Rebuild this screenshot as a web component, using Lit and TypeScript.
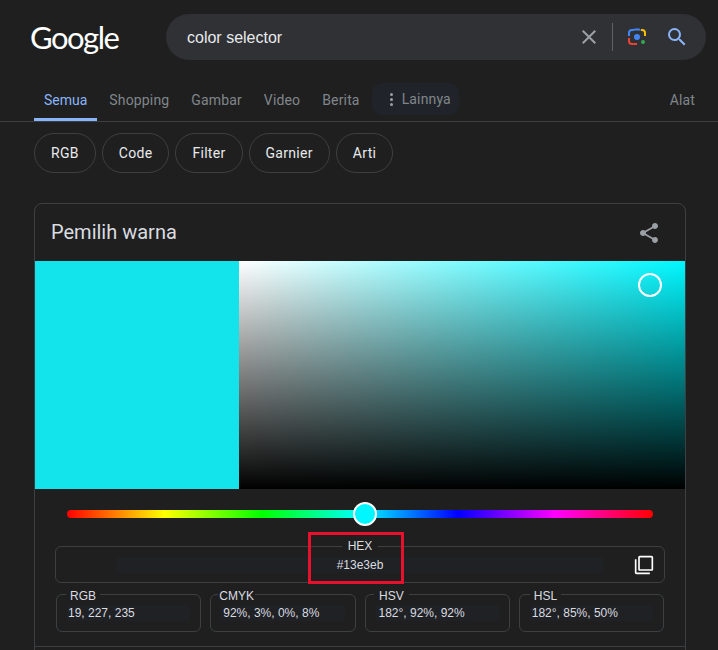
import { LitElement, html, css, svg } from "lit";
import { customElement } from "lit/decorators.js";

const tabs = ["Semua", "Shopping", "Gambar", "Video", "Berita"];
const chips = ["RGB", "Code", "Filter", "Garnier", "Arti"];
const formats = [
  { label: "RGB", value: "19, 227, 235", pad: 4, shift: -1, indent: 1 },
  { label: "CMYK", value: "92%, 3%, 0%, 8%", pad: 1, shift: -3, indent: 2 },
  { label: "HSV", value: "182°, 92%, 92%", pad: 5, shift: -1.5, indent: 3 },
  { label: "HSL", value: "182°, 85%, 50%", pad: 4, shift: 0, indent: 2 },
];

const icon = (size: number, fill: string, d: string) => html`
  <svg width=${size} height=${size} viewBox="0 0 24 24" fill=${fill}>${svg`<path d=${d}></path>`}</svg>
`;

@customElement("app-root")
export class AppRoot extends LitElement {
  static styles = css`
    :host {
      display: block;
      width: 718px;
      height: 650px;
      overflow: hidden;
      background: #1f1f1f;
      font-family: Roboto, "Liberation Sans", sans-serif;
      color: #e8eaed;
    }

    .header {
      display: flex;
      align-items: center;
      height: 46px;
      padding: 14px 12px 0 30px;
    }

    .logo {
      width: 136px;
      flex: none;
      font-family: Lato, sans-serif;
      font-size: 31px;
      line-height: 46px;
      letter-spacing: -1.5px;
      color: #fff;
    }

    .search {
      display: flex;
      align-items: center;
      width: 540px;
      height: 46px;
      flex: none;
      box-sizing: border-box;
      padding: 0 17px 0 21px;
      border-radius: 23px;
      background: #303134;
    }

    .query {
      flex: 1;
      padding-top: 2px;
      font-family: "Liberation Sans", sans-serif;
      font-size: 16px;
      color: #e8eaed;
    }

    .search svg {
      display: block;
      flex: none;
    }

    .sep {
      width: 1px;
      height: 28px;
      margin: 0 14px 0 11px;
      background: #5f6368;
    }

    .lens {
      margin-right: 18px;
    }

    .nav {
      display: flex;
      gap: 2px;
      height: 40px;
      margin-top: 21px;
      padding: 0 23px 0 34px;
      border-bottom: 1px solid #3c4043;
      letter-spacing: 0.15px;
    }

    .tab {
      box-sizing: border-box;
      height: 40px;
      padding: 0 10px;
      font-size: 14px;
      line-height: 38px;
      color: #80868b;
    }

    .tab.active {
      border-bottom: 3px solid #8ab4f8;
      letter-spacing: 0;
      color: #8ab4f8;
    }

    .more {
      display: flex;
      align-items: center;
      gap: 9px;
      height: 32px;
      margin: 2px 0 0 0;
      padding: 0 8px 0 18px;
      border-radius: 10px;
      background: #202329;
      font-size: 14px;
      color: #80868b;
    }

    .dots {
      display: flex;
      flex-direction: column;
      gap: 2px;
    }

    .dots i {
      width: 3px;
      height: 3px;
      border-radius: 50%;
      background: #9aa0a6;
    }

    .tools {
      margin-left: auto;
      font-size: 14px;
      line-height: 38px;
      color: #80868b;
    }

    .chips {
      display: flex;
      gap: 6px;
      margin: 11px 0 0 34px;
    }

    .chip {
      box-sizing: border-box;
      height: 40px;
      padding: 0 16px;
      border: 1px solid #3c4043;
      border-radius: 20px;
      font-size: 14px;
      line-height: 38px;
      letter-spacing: 0.3px;
      color: #e8eaed;
    }

    .card {
      box-sizing: border-box;
      width: 652px;
      height: 460px;
      margin: 30px 0 0 34px;
      border: 1px solid #3c4043;
      border-radius: 8px 8px 0 0;
    }

    .card-head {
      display: flex;
      align-items: center;
      justify-content: space-between;
      height: 57px;
      padding: 0 24px 0 16px;
    }

    .card-head h2 {
      margin: 0 0 2px;
      font-size: 20px;
      font-weight: 400;
      color: #dadce0;
    }

    .card-head svg {
      display: block;
    }

    .picker {
      display: flex;
      height: 228px;
    }

    .swatch {
      width: 204px;
      background: #13e3eb;
    }

    .field {
      position: relative;
      flex: 1;
      background: linear-gradient(to top, #000, transparent),
        linear-gradient(to right, #fff, #00f7ff);
    }

    .handle {
      position: absolute;
      top: 12px;
      right: 23px;
      box-sizing: border-box;
      width: 24px;
      height: 24px;
      border: 2px solid #fff;
      border-radius: 50%;
    }

    .hue {
      position: relative;
      height: 8px;
      margin: 21px 32px 0;
      border-radius: 4px;
      background: linear-gradient(
        to right,
        #f00,
        #ff0 16.66%,
        #0f0 33.33%,
        #0ff 50%,
        #00f 66.66%,
        #f0f 83.33%,
        #f00
      );
    }

    .thumb {
      position: absolute;
      top: -8px;
      left: 286px;
      box-sizing: border-box;
      width: 24px;
      height: 24px;
      border: 2px solid #fff;
      border-radius: 50%;
      background: #00f7ff;
    }

    fieldset {
      min-width: 0;
      margin: 0;
      border: 1px solid #3c4043;
      border-radius: 6px;
      font-family: "Liberation Sans", sans-serif;
      font-size: 12px;
      color: #dadce0;
    }

    legend {
      font-size: 12px;
      line-height: 16px;
    }

    .hex {
      position: relative;
      box-sizing: border-box;
      height: 45px;
      margin: 20px 20px 0;
      padding: 0;
    }

    .hex legend {
      margin: 0 auto;
      padding: 0 6px;
    }

    .hex .input {
      width: 486px;
      height: 16px;
      margin: 3px auto 0;
      background: #202124;
      line-height: 16px;
      text-align: center;
    }

    .hex svg {
      position: absolute;
      top: 1px;
      right: 10px;
    }

    .mark {
      position: absolute;
      top: -22px;
      left: 252px;
      box-sizing: border-box;
      width: 96px;
      height: 52px;
      border: 3px solid #e8112d;
    }

    .formats {
      display: grid;
      grid-template-columns: repeat(4, 1fr);
      gap: 9px;
      margin: 2px 21px 0;
    }

    .format {
      box-sizing: border-box;
      height: 47px;
      padding: 0 10px;
    }

    .format legend {
      padding-top: 3px;
    }

    .format .input {
      height: 16px;
      margin-top: 1px;
      background: #202124;
      line-height: 16px;
    }

    .rule {
      height: 1px;
      margin-top: 14px;
      background: #3c4043;
    }
  `;

  render() {
    return html`
      <div class="header">
        <div class="logo">Google</div>
        <div class="search">
          <div class="query">color selector</div>
          ${icon(
            24,
            "#9aa0a6",
            "M19 6.41 17.59 5 12 10.59 6.41 5 5 6.41 10.59 12 5 17.59 6.41 19 12 13.41 17.59 19 19 17.59 13.41 12z"
          )}
          <div class="sep"></div>
          <svg class="lens" width="20" height="20" viewBox="0 0 20 20" fill="none" stroke-width="2">
            <path d="M2 9V6a3 3 0 0 1 3-3h2" stroke="#4285f4"></path>
            <path d="M6 3.5 7.5 1.5h5L14 3.5z" fill="#4285f4"></path>
            <path d="M14 3h1a3 3 0 0 1 3 3v3" stroke="#fbbc04"></path>
            <path d="M2 11v3a3 3 0 0 0 3 3h5" stroke="#ea4335"></path>
            <circle cx="10" cy="10" r="3" fill="#4285f4"></circle>
            <circle cx="16" cy="15" r="2" fill="#34a853"></circle>
          </svg>
          ${icon(
            24,
            "#8ab4f8",
            "M15.5 14h-.79l-.28-.27A6.47 6.47 0 0 0 16 9.5 6.5 6.5 0 1 0 9.5 16c1.61 0 3.09-.59 4.23-1.57l.27.28v.79l5 4.99L20.49 19l-4.99-5zm-6 0C7.01 14 5 11.99 5 9.5S7.01 5 9.5 5 14 7.01 14 9.5 11.99 14 9.5 14z"
          )}
        </div>
      </div>

      <div class="nav">
        ${tabs.map((t, i) => html`<div class="tab ${i === 0 ? "active" : ""}">${t}</div>`)}
        <div class="more">
          <span class="dots"><i></i><i></i><i></i></span>
          Lainnya
        </div>
        <div class="tools">Alat</div>
      </div>

      <div class="chips">
        ${chips.map((c) => html`<div class="chip">${c}</div>`)}
      </div>

      <div class="card">
        <div class="card-head">
          <h2>Pemilih warna</h2>
          ${icon(
            24,
            "#9aa0a6",
            "M18 16.08c-.76 0-1.44.3-1.96.77L8.91 12.7c.05-.23.09-.46.09-.7s-.04-.47-.09-.7l7.05-4.11c.54.5 1.25.81 2.04.81 1.66 0 3-1.34 3-3s-1.34-3-3-3-3 1.34-3 3c0 .24.04.47.09.7L8.04 9.81C7.5 9.31 6.79 9 6 9c-1.66 0-3 1.34-3 3s1.34 3 3 3c.79 0 1.5-.31 2.04-.81l7.12 4.16c-.05.21-.08.43-.08.65 0 1.61 1.31 2.92 2.92 2.92 1.61 0 2.92-1.31 2.92-2.92s-1.31-2.92-2.92-2.92z"
          )}
        </div>

        <div class="picker">
          <div class="swatch"></div>
          <div class="field"><div class="handle"></div></div>
        </div>

        <div class="hue"><div class="thumb"></div></div>

        <fieldset class="hex">
          <legend>HEX</legend>
          <div class="input">#13e3eb</div>
          ${icon(
            20,
            "#fff",
            "M3 5H1v16c0 1.1.9 2 2 2h16v-2H3V5zm18-4H7c-1.1 0-2 .9-2 2v14c0 1.1.9 2 2 2h14c1.1 0 2-.9 2-2V3c0-1.1-.9-2-2-2zm0 16H7V3h14v14z"
          )}
          <div class="mark"></div>
        </fieldset>

        <div class="formats">
          ${formats.map(
            (f) => html`
              <fieldset class="format">
                <legend style="margin-left: ${f.shift}px; padding-left: ${f.pad}px; padding-right: ${f.pad}px">${f.label}</legend>
                <div class="input" style="text-indent: ${f.indent}px">${f.value}</div>
              </fieldset>
            `
          )}
        </div>

        <div class="rule"></div>
      </div>
    `;
  }
}
